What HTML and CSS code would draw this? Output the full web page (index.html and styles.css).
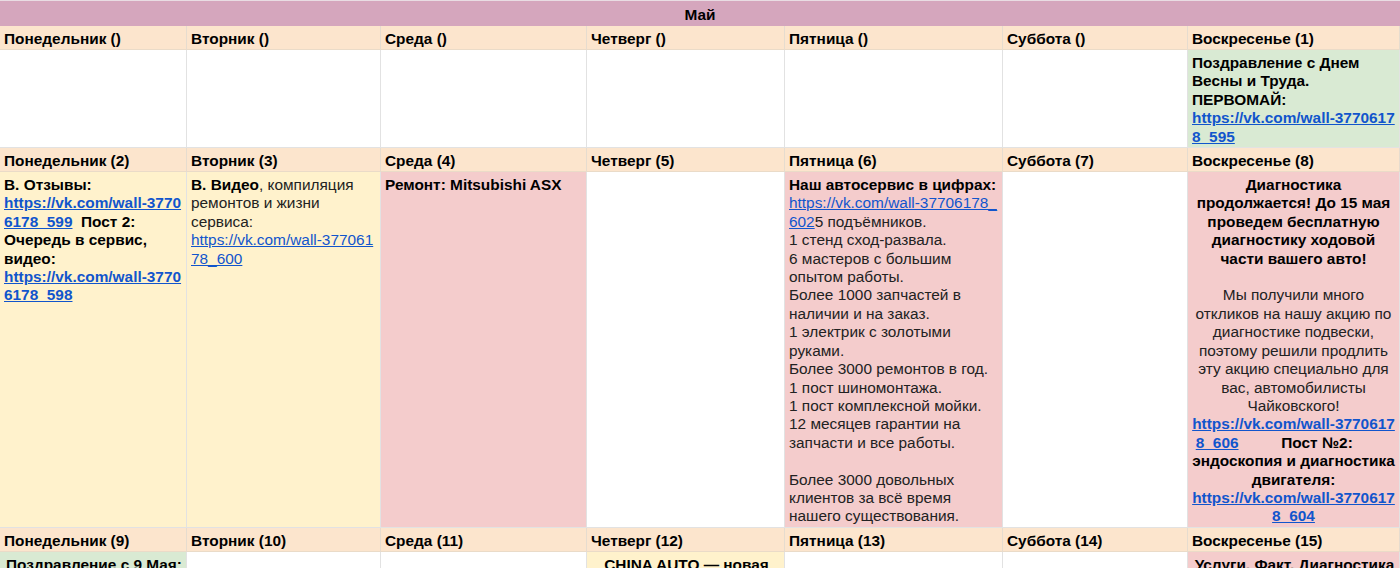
FILE: index.html
```html
<!DOCTYPE html>
<html lang="ru">
<head>
<meta charset="utf-8">
<title>Май</title>
<link rel="stylesheet" href="styles.css">
</head>
<body>
<div class="sheet">
  <div class="title">Май</div>

  <div class="hd">Понедельник ()</div>
  <div class="hd">Вторник ()</div>
  <div class="hd">Среда ()</div>
  <div class="hd">Четверг ()</div>
  <div class="hd">Пятница ()</div>
  <div class="hd">Суббота ()</div>
  <div class="hd">Воскресенье (1)</div>

  <div class="cell"></div>
  <div class="cell"></div>
  <div class="cell"></div>
  <div class="cell"></div>
  <div class="cell"></div>
  <div class="cell"></div>
  <div class="cell green bold">Поздравление с Днем Весны и Труда.<br>ПЕРВОМАЙ: <a href="#">https://vk.com/wall-&#8288;3770617<wbr>8_595</a></div>

  <div class="hd">Понедельник (2)</div>
  <div class="hd">Вторник (3)</div>
  <div class="hd">Среда (4)</div>
  <div class="hd">Четверг (5)</div>
  <div class="hd">Пятница (6)</div>
  <div class="hd">Суббота (7)</div>
  <div class="hd">Воскресенье (8)</div>

  <div class="cell yellow bold">В. Отзывы: <a href="#">https://vk.com/wall-&#8288;3770<wbr>6178_599</a>  Пост 2: Очередь в сервис, видео: <a href="#">https://vk.com/wall-&#8288;3770<wbr>6178_598</a></div>
  <div class="cell yellow"><b>В. Видео</b>, компиляция ремонтов и жизни сервиса: <a href="#">https://vk.com/wall-&#8288;377061<wbr>78_600</a></div>
  <div class="cell pink bold">Ремонт: Mitsubishi ASX</div>
  <div class="cell"></div>
  <div class="cell pink"><b>Наш автосервис в цифрах:</b> <a href="#">https://vk.com/wall-&#8288;37706178_<wbr>602</a>5 подъёмников.<br>1 стенд сход-развала.<br>6 мастеров с большим опытом работы.<br>Более 1000 запчастей в наличии и на заказ.<br>1 электрик с золотыми руками.<br>Более 3000 ремонтов в год.<br>1 пост шиномонтажа.<br>1 пост комплексной мойки.<br>12 месяцев гарантии на запчасти и все работы.<br><br>Более 3000 довольных клиентов за всё время нашего существования.</div>
  <div class="cell"></div>
  <div class="cell pink center lines"><b>Диагностика<br>продолжается! До 15 мая<br>проведем бесплатную<br>диагностику ходовой<br>части вашего авто!</b><br><br>Мы получили много<br>откликов на нашу акцию по<br>диагностике подвески,<br>поэтому решили продлить<br>эту акцию специально для<br>вас, автомобилисты<br>Чайковского!<br><b><a href="#">https://vk.com/wall-3770617<br>8_606</a>          Пост №2:         <br>эндоскопия и диагностика<br>двигателя:<br><a href="#">https://vk.com/wall-3770617<br>8_604</a></b></div>

  <div class="hd">Понедельник (9)</div>
  <div class="hd">Вторник (10)</div>
  <div class="hd">Среда (11)</div>
  <div class="hd">Четверг (12)</div>
  <div class="hd">Пятница (13)</div>
  <div class="hd">Суббота (14)</div>
  <div class="hd">Воскресенье (15)</div>

  <div class="cell green bold center">Поздравление с 9 Мая: <a href="#">https://vk.com/wall-&#8288;3770617<wbr>8_610</a></div>
  <div class="cell"></div>
  <div class="cell"></div>
  <div class="cell yellow bold center">CHINA AUTO — новая рубрика о китайских автомобилях</div>
  <div class="cell"></div>
  <div class="cell"></div>
  <div class="cell pink bold center">Услуги. Факт. Диагностика ходовой части</div>
</div>
</body>
</html>
```

FILE: styles.css
```css
html, body {
  margin: 0;
  padding: 0;
  height: 100%;
  overflow: hidden;
  background: #ffffff;
}

.sheet {
  display: grid;
  grid-template-columns: 187px 194px 206px 198px 218px 185px 212px;
  width: 1400px;
  font-family: "Liberation Sans", Arial, sans-serif;
  font-size: 15.4px;
  line-height: 18.4px;
  color: #222222;
}

.title {
  grid-column: 1 / -1;
  box-sizing: border-box;
  height: 26px;
  padding-top: 5px;
  border-top: 1px solid #e9dce3;
  background: #d5a6bd;
  color: #000000;
  font-weight: bold;
  text-align: center;
}

.hd {
  box-sizing: border-box;
  height: 24px;
  padding: 4px 4px 0 4px;
  background: #fce5cd;
  border-right: 1px solid #e6dccf;
  border-bottom: 1px solid #eadbc8;
  color: #000000;
  font-weight: bold;
  white-space: nowrap;
  overflow: hidden;
}

.cell {
  box-sizing: border-box;
  padding: 4px 2px 1px 4px;
  border-right: 1px solid #e2e2e2;
  border-bottom: 1px solid #e2e2e2;
  background: #ffffff;
  white-space: pre-wrap;
  overflow-wrap: normal;
  min-width: 0;
}

.cell.lines {
  white-space: pre;
  padding-left: 2px;
}

.green { background: #d9ead3; }
.yellow { background: #fff2cc; }
.pink { background: #f4cccc; }

.bold, .cell b {
  font-weight: bold;
  color: #000000;
}

.center { text-align: center; }

.cell a {
  color: #1155cc;
  text-decoration: underline;
}
```
